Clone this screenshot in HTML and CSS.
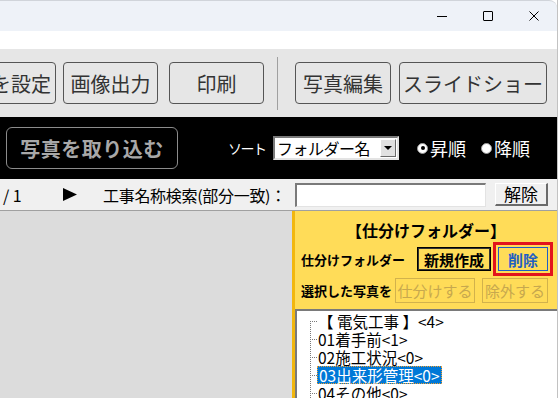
FILE: index.html
```html
<!DOCTYPE html>
<html lang="ja">
  <head>
    <meta charset="UTF-8" />
    <title>写真整理</title>
    <link rel="stylesheet" href="styles.css">
  </head>
  <body>
    <div class="window">
      <!-- Title bar with window controls -->
      <div class="titlebar">
        <span class="win-btn"><span class="ic-min"></span></span>
        <span class="win-btn"><span class="ic-max"></span></span>
        <span class="win-btn">
          <svg width="10" height="10" viewBox="0 0 10 10">
            <path d="M0.5 0.5 L9.5 9.5 M9.5 0.5 L0.5 9.5" stroke="#000" stroke-width="1" />
          </svg>
        </span>
      </div>
      <div class="menubar"></div>

      <!-- Main toolbar -->
      <div class="toolbar">
        <button class="tool-btn btn-first">背景を設定</button>
        <button class="tool-btn btn-export">画像出力</button>
        <button class="tool-btn btn-print">印刷</button>
        <span class="tool-sep"></span>
        <button class="tool-btn btn-edit">写真編集</button>
        <button class="tool-btn btn-slide">スライドショー</button>
      </div>

      <!-- Import / sort bar -->
      <div class="importbar">
        <button class="import-btn">写真を取り込む</button>
        <span class="sort-label">ソート</span>
        <div class="select">
          <span class="select-text">フォルダー名</span>
          <span class="select-arrow"></span>
        </div>
        <label class="radio radio-asc"><span class="radio-dot checked"></span>昇順</label>
        <label class="radio"><span class="radio-dot"></span>降順</label>
      </div>

      <!-- Paging / search row -->
      <div class="searchrow">
        <span class="page">/ 1</span>
        <svg class="next" width="14" height="13" viewBox="0 0 14 13">
          <polygon points="0,0 14,6.5 0,13" fill="#000" />
        </svg>
        <span class="search-label">工事名称検索(部分一致)：</span>
        <span class="search-input"></span>
        <button class="clear-btn">解除</button>
      </div>

      <div class="main">
        <div class="viewer"></div>
        <!-- Sorting folder panel -->
        <aside class="sort-panel">
          <h2 class="panel-title">【仕分けフォルダー】</h2>
          <div class="panel-row">
            <span class="panel-label">仕分けフォルダー</span>
            <button class="panel-btn btn-new">新規作成</button>
            <span class="highlight">
              <button class="panel-btn btn-delete">削除</button>
            </span>
          </div>
          <div class="panel-row row-selected">
            <span class="panel-label">選択した写真を</span>
            <button class="panel-btn btn-disabled btn-sort">仕分けする</button>
            <button class="panel-btn btn-disabled btn-exclude">除外する</button>
          </div>
          <div class="tree">
            <ul class="tree-list">
              <li>【 電気工事 】&lt;4&gt;</li>
              <li>01着手前&lt;1&gt;</li>
              <li>02施工状況&lt;0&gt;</li>
              <li><span class="tree-selected">03出来形管理&lt;0&gt;</span></li>
              <li>04その他&lt;0&gt;</li>
            </ul>
          </div>
        </aside>
      </div>
    </div>
  </body>
</html>
```

FILE: styles.css
```css
* {
  margin: 0;
  padding: 0;
  box-sizing: border-box;
}

body {
  width: 558px;
  height: 398px;
  overflow: hidden;
  background-color: #fff;
  font-family: "Noto Sans CJK JP", sans-serif;
}

button {
  font-family: inherit;
  cursor: pointer;
}

.window {
  width: 558px;
  height: 398px;
  border-right: 1px solid #c2c2c2;
  display: flex;
  flex-direction: column;
  overflow: hidden;
}

/* Title bar */
.titlebar {
  height: 31px;
  flex-shrink: 0;
  background-color: #eef2f8;
  border-top: 1px solid #d0d4da;
  border-top-right-radius: 8px;
  display: flex;
  justify-content: flex-end;
}

.win-btn {
  width: 46px;
  height: 30px;
  display: flex;
  align-items: center;
  justify-content: center;
}

.ic-min {
  width: 10px;
  height: 1px;
  background-color: #000;
}

.ic-max {
  width: 10px;
  height: 10px;
  border: 1px solid #000;
  border-radius: 1px;
}

.menubar {
  height: 18px;
  flex-shrink: 0;
  background-color: #fff;
}

/* Toolbar */
.toolbar {
  height: 68px;
  flex-shrink: 0;
  background-color: #e6e6e6;
  display: flex;
  align-items: center;
}

.tool-btn {
  height: 42px;
  border: 1px solid #555;
  border-radius: 4px;
  background-color: #e6e6e6;
  color: #333;
  font-size: 20px;
  white-space: nowrap;
}

.btn-first {
  width: 110px;
  margin-left: -54px;
}

.btn-export {
  width: 95px;
  margin-left: 7px;
}

.btn-print {
  width: 95px;
  margin-left: 11px;
}

.tool-sep {
  width: 1px;
  height: 53px;
  margin-left: 13px;
  background-color: #a0a0a0;
}

.btn-edit {
  width: 96px;
  margin-left: 17px;
}

.btn-slide {
  width: 148px;
  margin-left: 8px;
}

/* Import and sort bar */
.importbar {
  height: 62px;
  flex-shrink: 0;
  background-color: #000;
  display: flex;
  align-items: center;
}

.import-btn {
  width: 172px;
  height: 42px;
  margin-left: 6px;
  border: 1px solid #8c8c8c;
  border-radius: 6px;
  background-color: #000;
  color: #a8a8a8;
  font-size: 20px;
  font-weight: 700;
  letter-spacing: 0.5px;
}

.sort-label {
  width: 37px;
  margin-left: 50px;
  color: #fff;
  font-size: 14px;
  letter-spacing: -1.5px;
  white-space: nowrap;
}

.select {
  width: 126px;
  height: 24px;
  margin-left: 8px;
  background-color: #fff;
  border-top: 2px solid #7a7a7a;
  border-left: 2px solid #7a7a7a;
  border-bottom: 2px solid #e3e3e3;
  border-right: 2px solid #e3e3e3;
  display: flex;
  align-items: center;
}

.select-text {
  flex-grow: 1;
  padding-left: 2px;
  font-size: 16px;
  line-height: 20px;
  color: #000;
  letter-spacing: -0.5px;
}

.select-arrow {
  width: 16px;
  height: 18px;
  margin-right: 1px;
  background-color: #e1e1e1;
  border-top: 1px solid #fff;
  border-left: 1px solid #fff;
  border-bottom: 1px solid #6a6a6a;
  border-right: 1px solid #6a6a6a;
  position: relative;
}

.select-arrow::after {
  content: "";
  position: absolute;
  left: 3px;
  top: 6px;
  border-left: 4px solid transparent;
  border-right: 4px solid transparent;
  border-top: 4px solid #000;
}

.radio {
  display: flex;
  align-items: center;
  color: #fff;
  font-size: 18px;
}

.radio-asc {
  width: 64px;
  margin-left: 18px;
}

.radio-dot {
  width: 11px;
  height: 11px;
  margin-right: 2px;
  border-radius: 50%;
  background-color: #fff;
  border: 1px solid #9a9a9a;
  display: flex;
  align-items: center;
  justify-content: center;
}

.radio-dot.checked::after {
  content: "";
  width: 4px;
  height: 4px;
  border-radius: 50%;
  background-color: #000;
}

/* Paging and search row */
.searchrow {
  height: 32px;
  flex-shrink: 0;
  background-color: #f0f0f0;
  border-bottom: 1px solid #a0a0a0;
  display: flex;
  align-items: center;
  font-size: 16px;
  color: #000;
}

.page {
  width: 63px;
  padding-left: 3px;
}

.search-label {
  width: 192px;
  margin-left: 26px;
  white-space: nowrap;
  letter-spacing: -0.3px;
}

.search-input {
  width: 191px;
  height: 24px;
  background-color: #fff;
  border-top: 2px solid #7a7a7a;
  border-left: 2px solid #7a7a7a;
  border-bottom: 1px solid #e3e3e3;
  border-right: 1px solid #e3e3e3;
}

.clear-btn {
  width: 53px;
  height: 23px;
  margin-left: 9px;
  background-color: #f0f0f0;
  border-top: 1px solid #fff;
  border-left: 1px solid #fff;
  border-bottom: 2px solid #6a6a6a;
  border-right: 2px solid #6a6a6a;
  font-size: 17px;
  line-height: 18px;
  color: #000;
}

/* Main area */
.main {
  flex-grow: 1;
  display: flex;
  min-height: 0;
}

.viewer {
  flex-grow: 1;
  background-color: #dcdcdc;
}

.sort-panel {
  width: 265px;
  flex-shrink: 0;
  background-color: #ffdc58;
  border-left: 3px solid #f2b70e;
  padding-top: 9px;
  display: flex;
  flex-direction: column;
}

.panel-title {
  font-size: 16px;
  font-weight: 700;
  line-height: 20px;
  text-align: center;
  color: #000;
}

.panel-row {
  display: flex;
  align-items: center;
  margin-top: 2px;
  padding-left: 6px;
}

.panel-label {
  font-size: 13px;
  font-weight: 700;
  color: #000;
  white-space: nowrap;
}

.panel-row .panel-label {
  width: 116px;
}

.row-selected .panel-label {
  width: 94px;
}

.panel-btn {
  height: 24px;
  background-color: #ffdc58;
  font-size: 15px;
  font-weight: 700;
  white-space: nowrap;
}

.btn-new {
  width: 74px;
  border: 1px solid #000;
  box-shadow: inset 0 0 0 1px #333;
  color: #000;
}

.highlight {
  margin-left: 2px;
  padding: 2px;
  border: 3px solid #e2141c;
  display: flex;
}

.btn-delete {
  width: 50px;
  border: 1px solid #1f5fc4;
  color: #1f5fc4;
}

.btn-disabled {
  height: 25px;
  border: 1px solid #d2b24c;
  color: #c7a84e;
  font-weight: 400;
}

.btn-sort {
  width: 80px;
}

.btn-exclude {
  width: 66px;
  margin-left: 7px;
}

/* Folder tree */
.tree {
  flex-grow: 1;
  margin-top: 6px;
  background-color: #fff;
  border-top: 2px solid #7a7a7a;
  border-left: 2px solid #7a7a7a;
  padding-top: 1px;
}

.tree-list {
  list-style: none;
  position: relative;
  font-size: 15.5px;
  line-height: 18px;
  color: #000;
}

.tree-list::before {
  content: "";
  position: absolute;
  left: 13px;
  top: 9px;
  bottom: -20px;
  border-left: 1px dotted #7a7a7a;
}

.tree-list li {
  position: relative;
  height: 18px;
  padding-left: 21px;
  white-space: nowrap;
}

.tree-list li::before {
  content: "";
  position: absolute;
  left: 13px;
  top: 9px;
  width: 7px;
  border-top: 1px dotted #7a7a7a;
}

.tree-selected {
  display: inline-block;
  margin-left: -1px;
  padding: 0 1px;
  line-height: 16px;
  background-color: #0078d7;
  color: #fff;
  border: 1px dotted #f0a030;
}
```
